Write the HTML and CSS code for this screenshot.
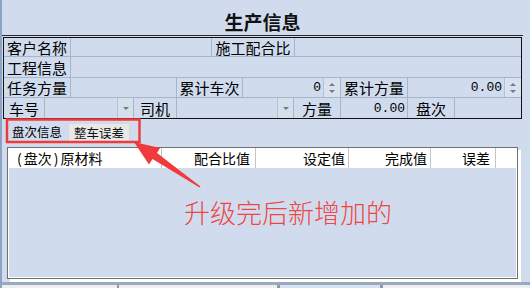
FILE: index.html
```html
<!DOCTYPE html>
<html lang="zh-CN">
<head>
    <meta charset="UTF-8">
    <title>生产信息</title>
    <link rel="stylesheet" href="styles.css">
</head>
<body>
    <div class="window">
        <div class="title">生产信息</div>

        <div class="info">
            <div class="row r1">
                <div class="cell lbl w67">客户名称</div>
                <div class="cell w141"></div>
                <div class="cell lbl w83">施工配合比</div>
                <div class="cell fill"></div>
            </div>
            <div class="row r2">
                <div class="cell lbl w67">工程信息</div>
                <div class="cell fill"></div>
            </div>
            <div class="row r3">
                <div class="cell lbl w67">任务方量</div>
                <div class="cell w106"></div>
                <div class="cell lbl w66">累计车次</div>
                <div class="cell w98"><span class="num">0</span><span class="spin"></span></div>
                <div class="cell lbl w67">累计方量</div>
                <div class="cell fill"><span class="num">0.00</span><span class="spin"></span></div>
            </div>
            <div class="row r4">
                <div class="cell lbl w41">车号</div>
                <div class="cell w89"><span class="dd"></span></div>
                <div class="cell lbl w43">司机</div>
                <div class="cell w117"><span class="dd"></span></div>
                <div class="cell lbl w47">方量</div>
                <div class="cell w67"><span class="num">0.00</span></div>
                <div class="cell lbl w47">盘次</div>
                <div class="cell fill"></div>
            </div>
        </div>

        <div class="tabs">
            <span class="tab-on">盘次信息</span>
            <span class="tab-btn">整车误差</span>
        </div>

        <div class="grid">
            <div class="grid-head">
                <div class="col c1"><span class="paren">(</span>盘次<span class="paren">)</span>原材料</div>
                <div class="col c2">配合比值</div>
                <div class="col c3">设定值</div>
                <div class="col c4">完成值</div>
                <div class="col c5">误差</div>
                <div class="col c6"></div>
            </div>
            <div class="grid-body"></div>
        </div>

        <div class="statusbar">
            <span class="seg s1"></span>
            <span class="sep thin"></span>
            <span class="seg s2"></span>
            <span class="sep"></span>
            <span class="seg s3 active"></span>
            <span class="sep"></span>
            <span class="seg s4"></span>
        </div>

        <!-- annotation drawn over the screenshot -->
        <svg class="annot" width="530" height="288" viewBox="0 0 530 288">
            <rect x="7" y="119.5" width="132.5" height="22.5" fill="none" stroke="#ef3b3b" stroke-width="2.5"/>
            <polygon points="134,142 160,148 157,153 200.5,186.5 199.5,187.5 152.5,159 149,164.5" fill="#ef3b3b"/>
        </svg>
        <div class="callout">升级完后新增加的</div>
    </div>
</body>
</html>
```

FILE: styles.css
```css
* {
    box-sizing: border-box;
}

body {
    margin: 0;
    background-color: #d0dcee;
    font-family: "Noto Sans CJK SC", "Noto Sans", sans-serif;
    color: #000;
}

.window {
    position: relative;
    width: 530px;
    height: 288px;
    border-left: 2px solid #8da3c3;
    display: flex;
    flex-direction: column;
    overflow: hidden;
}

.title {
    height: 36px;
    margin-right: 7px;
    padding-top: 9px;
    border-bottom: 1px solid #2a2a2a;
    text-align: center;
    font-size: 19px;
    font-weight: bold;
    line-height: 26px;
    color: #111;
}

/* top info box */
.info {
    margin: 1px 8px 0 1px;
    border: 1px solid #111;
}

.row {
    display: flex;
    border-bottom: 1px solid #a6b6ca;
    font-size: 15px;
    line-height: 1;
}

.row:last-child {
    border-bottom: 0;
}

.r1 { height: 19px; }
.r2 { height: 21px; }
.r3 { height: 20px; }
.r4 { height: 20px; }

.cell {
    display: flex;
    align-items: center;
    border-right: 1px solid #a6b6ca;
}

.cell.fill {
    flex: 1;
    border-right: 0;
}

.lbl {
    justify-content: center;
}

.w41 { width: 41px; }
.w43 { width: 43px; }
.w47 { width: 47px; }
.w66 { width: 66px; }
.w67 { width: 67px; }
.w83 { width: 83px; }
.w89 { width: 89px; }
.w98 { width: 98px; }
.w106 { width: 106px; }
.w117 { width: 117px; }
.w141 { width: 141px; }

.num {
    flex: 1;
    text-align: right;
    padding-right: 2px;
    font-family: "Liberation Mono", monospace;
    font-size: 13px;
}

.spin {
    width: 17px;
    align-self: stretch;
    border-left: 1px solid #b4c2d4;
    background-color: #d9e2ee;
    display: flex;
    flex-direction: column;
    align-items: center;
    justify-content: center;
    gap: 4px;
}

.spin::before,
.spin::after {
    content: "";
    border-left: 3px solid transparent;
    border-right: 3px solid transparent;
}

.spin::before {
    border-bottom: 3px solid #6d7d92;
}

.spin::after {
    border-top: 3px solid #6d7d92;
}

.dd {
    width: 16px;
    align-self: stretch;
    margin-left: auto;
    border-left: 1px solid #b4c2d4;
    background-color: #d6e0ed;
    display: flex;
    align-items: center;
    justify-content: center;
}

.dd::after {
    content: "";
    border-left: 3px solid transparent;
    border-right: 3px solid transparent;
    border-top: 3px solid #6b7b8f;
}

/* tabs */
.tabs {
    height: 28px;
    display: flex;
    align-items: center;
    padding-left: 8px;
    font-size: 12.5px;
    line-height: 1;
}

.tab-on {
    padding: 0 2px;
    margin-top: -2px;
}

.tab-btn {
    margin-left: 4px;
    height: 20px;
    padding: 0 5px;
    display: flex;
    align-items: center;
    background-color: #e8e8e8;
    border: 1px solid #d8d8d8;
    color: #111;
}

/* grid */
.grid {
    margin-left: 5px;
    width: 511px;
    height: 132px;
    border: 1px solid #707070;
    box-shadow: inset 0 0 0 1px #fff, 3px 3px 0 0 #fff;
    display: flex;
    flex-direction: column;
}

.grid-head {
    height: 20px;
    display: flex;
    background-color: #fff;
    font-size: 14px;
    line-height: 1;
}

.col {
    display: flex;
    align-items: center;
    justify-content: flex-end;
    padding-right: 5px;
    border-right: 1px solid #c4c4c4;
}

.paren {
    margin: 0 2px;
}

.c1 { width: 154px; justify-content: flex-start; padding-left: 7px; }
.c2 { width: 94px; }
.c3 { width: 93px; padding-right: 3px; }
.c4 { width: 82px; padding-right: 3px; }
.c5 { width: 65px; }
.c6 { flex: 1; border-right: 0; }

.grid-body {
    flex: 1;
}

/* bottom strip */
.statusbar {
    flex: 1;
    margin-top: 3px;
    border-top: 3px solid #9aaabe;
    display: flex;
    background-color: #eeeeee;
}

.seg { display: block; }
.s1 { width: 115px; }
.s2 { width: 158px; }
.s3 { width: 100px; }
.s4 { flex: 1; }

.seg.active {
    background-color: #d8e4f4;
}

.sep {
    width: 3px;
    background-color: #979797;
}

.sep.thin {
    width: 2px;
}

/* annotation */
.annot {
    position: absolute;
    left: -2px;
    top: 0;
    pointer-events: none;
}

.callout {
    position: absolute;
    left: 182px;
    top: 199px;
    font-size: 26px;
    font-weight: 300;
    line-height: 26px;
    color: #ef4545;
    white-space: nowrap;
}
```
